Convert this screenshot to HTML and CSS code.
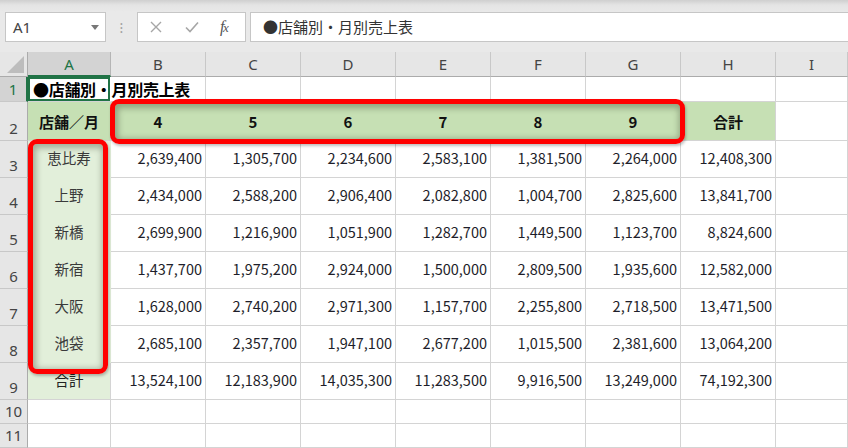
FILE: index.html
```html
<!DOCTYPE html>
<html lang="ja">
<head>
<meta charset="utf-8">
<title>店舗別・月別売上表</title>
<link rel="stylesheet" href="styles.css">
</head>
<body>
<div class="fbar">
  <div class="namebox"><span class="ref">A1</span><span class="drop"></span></div>
  <div class="grip">⁝</div>
  <div class="btns">
    <svg class="ic" width="14" height="14" viewBox="0 0 14 14"><path d="M2 2L12 12M12 2L2 12" stroke="#a6a6a6" stroke-width="1.4" fill="none"/></svg>
    <svg class="ic" width="16" height="14" viewBox="0 0 16 14"><path d="M2 7.5L6 11.5L14 2.5" stroke="#a6a6a6" stroke-width="1.6" fill="none"/></svg>
    <span class="fx"><i>f</i><i class="x">x</i></span>
  </div>
  <div class="finput">●店舗別・月別売上表</div>
</div>
<div class="sheet">
  <div class="corner"><span class="tri"></span></div>
  <div class="ch sel">A</div><div class="ch">B</div><div class="ch">C</div><div class="ch">D</div><div class="ch">E</div><div class="ch">F</div><div class="ch">G</div><div class="ch">H</div><div class="ch">I</div>

  <div class="rh sel">1</div>
  <div class="c a1"><span class="title">●店舗別・月別売上表</span></div><div class="c"></div><div class="c"></div><div class="c"></div><div class="c"></div><div class="c"></div><div class="c"></div><div class="c"></div><div class="c"></div>

  <div class="rh">2</div>
  <div class="c hd g1">店舗／月</div><div class="c hd g1 in">4</div><div class="c hd g1 in">5</div><div class="c hd g1 in">6</div><div class="c hd g1 in">7</div><div class="c hd g1 in">8</div><div class="c hd g1 in">9</div><div class="c hd g1">合計</div><div class="c"></div>

  <div class="rh">3</div>
  <div class="c st g2 in">恵比寿</div><div class="c n">2,639,400</div><div class="c n">1,305,700</div><div class="c n">2,234,600</div><div class="c n">2,583,100</div><div class="c n">1,381,500</div><div class="c n">2,264,000</div><div class="c n">12,408,300</div><div class="c"></div>

  <div class="rh">4</div>
  <div class="c st g2 in">上野</div><div class="c n">2,434,000</div><div class="c n">2,588,200</div><div class="c n">2,906,400</div><div class="c n">2,082,800</div><div class="c n">1,004,700</div><div class="c n">2,825,600</div><div class="c n">13,841,700</div><div class="c"></div>

  <div class="rh">5</div>
  <div class="c st g2 in">新橋</div><div class="c n">2,699,900</div><div class="c n">1,216,900</div><div class="c n">1,051,900</div><div class="c n">1,282,700</div><div class="c n">1,449,500</div><div class="c n">1,123,700</div><div class="c n">8,824,600</div><div class="c"></div>

  <div class="rh">6</div>
  <div class="c st g2 in">新宿</div><div class="c n">1,437,700</div><div class="c n">1,975,200</div><div class="c n">2,924,000</div><div class="c n">1,500,000</div><div class="c n">2,809,500</div><div class="c n">1,935,600</div><div class="c n">12,582,000</div><div class="c"></div>

  <div class="rh">7</div>
  <div class="c st g2 in">大阪</div><div class="c n">1,628,000</div><div class="c n">2,740,200</div><div class="c n">2,971,300</div><div class="c n">1,157,700</div><div class="c n">2,255,800</div><div class="c n">2,718,500</div><div class="c n">13,471,500</div><div class="c"></div>

  <div class="rh">8</div>
  <div class="c st g2 in">池袋</div><div class="c n">2,685,100</div><div class="c n">2,357,700</div><div class="c n">1,947,100</div><div class="c n">2,677,200</div><div class="c n">1,015,500</div><div class="c n">2,381,600</div><div class="c n">13,064,200</div><div class="c"></div>

  <div class="rh">9</div>
  <div class="c st g2 tot">合計</div><div class="c n">13,524,100</div><div class="c n">12,183,900</div><div class="c n">14,035,300</div><div class="c n">11,283,500</div><div class="c n">9,916,500</div><div class="c n">13,249,000</div><div class="c n">74,192,300</div><div class="c"></div>

  <div class="rh">10</div>
  <div class="c"></div><div class="c"></div><div class="c"></div><div class="c"></div><div class="c"></div><div class="c"></div><div class="c"></div><div class="c"></div><div class="c"></div>

  <div class="rh">11</div>
  <div class="c"></div><div class="c"></div><div class="c"></div><div class="c"></div><div class="c"></div><div class="c"></div><div class="c"></div><div class="c"></div><div class="c"></div>

  <div class="mark mark-months"></div>
  <div class="mark mark-stores"></div>
</div>
</body>
</html>
```
FILE: styles.css
```css
* { box-sizing: border-box; }
html, body { margin: 0; padding: 0; }
body {
  width: 848px;
  height: 448px;
  overflow: hidden;
  background: #ffffff;
  font-family: "Noto Sans CJK JP", "Noto Sans", sans-serif;
  color: #222;
}

/* formula bar */
.fbar {
  height: 52px;
  display: flex;
  align-items: flex-start;
  padding: 12px 0 0 5px;
  background: linear-gradient(#cfcfcf 0px, #e4e4e4 5px, #e9e9e9 12px);
}
.namebox {
  width: 101px;
  height: 30px;
  background: #fff;
  border: 1px solid #c6c6c6;
  display: flex;
  align-items: center;
  justify-content: space-between;
  padding: 0 6px 0 7px;
}
.ref { font-size: 15px; color: #444; font-family: "Noto Sans", sans-serif; }
.drop {
  width: 0; height: 0;
  border-left: 4px solid transparent;
  border-right: 4px solid transparent;
  border-top: 5px solid #777;
}
.grip {
  width: 31px;
  height: 30px;
  line-height: 30px;
  text-align: center;
  color: #a0a0a0;
  font-size: 14px;
}
.btns {
  width: 109px;
  height: 30px;
  background: #fff;
  border: 1px solid #c6c6c6;
  display: flex;
  align-items: center;
  padding: 0 0 0 11px;
}
.btns .ic:first-child { margin-right: 21px; }
.btns .ic:nth-child(2) { margin-right: 20px; }
.fx {
  font-family: "Liberation Serif", "DejaVu Serif", serif;
  font-size: 16px;
  color: #555;
  letter-spacing: -1.5px;
}
.fx .x { font-size: 13px; }
.finput {
  margin-left: 4px;
  flex: 1;
  height: 30px;
  background: #fff;
  border: 1px solid #c6c6c6;
  border-right: none;
  padding-left: 12px;
  font-size: 15px;
  line-height: 28px;
  color: #333;
}

/* sheet grid */
.sheet {
  position: relative;
  display: grid;
  grid-template-columns: 28px 83px repeat(7, 95px) 72px;
  grid-template-rows: 25px 25px 39px repeat(7, 37px) 24px 24px;
  background: #fff;
}
.corner {
  background: #e6e6e6;
  border-right: 1px solid #ababab;
  border-bottom: 1px solid #ababab;
  position: relative;
}
.tri {
  position: absolute;
  right: 3px;
  bottom: 3px;
  width: 0; height: 0;
  border-left: 17px solid transparent;
  border-bottom: 17px solid #bdbdbd;
}
.ch {
  background: #e6e6e6;
  border-right: 1px solid #c8c8c8;
  border-bottom: 1px solid #ababab;
  text-align: center;
  font-size: 15px;
  line-height: 24px;
  color: #444;
  font-family: "Noto Sans", sans-serif;
}
.ch.sel {
  background: #d3d3d3;
  color: #217346;
  border-bottom: 2px solid #217346;
  border-right-color: #b5b5b5;
}
.rh {
  background: #e6e6e6;
  border-right: 1px solid #ababab;
  border-bottom: 1px solid #c8c8c8;
  text-align: center;
  font-size: 15px;
  color: #444;
  font-family: "Noto Sans", sans-serif;
  display: flex;
  align-items: flex-end;
  justify-content: center;
  padding-bottom: 2px;
}
.rh.sel {
  background: #d3d3d3;
  color: #217346;
  border-right: 2px solid #217346;
  align-items: center;
  padding-bottom: 0;
}
.c {
  border-right: 1px solid #d4d4d4;
  border-bottom: 1px solid #d4d4d4;
  font-size: 14.5px;
  white-space: nowrap;
  display: flex;
  align-items: center;
  color: #1e1e2a;
}
.a1 {
  box-shadow: inset 0 0 0 2px #217346;
  border-right-color: transparent;
  overflow: visible;
  padding-left: 5px;
  position: relative;
  z-index: 1;
}
.title {
  font-size: 16px;
  font-weight: 700;
  color: #000;
  letter-spacing: -0.3px;
}
.g1 { background: #c6e0b4; }
.g2 { background: #e2efda; }
.in { border-right-color: transparent; }
.g1.in { border-right-color: #c6e0b4; }
.st.in { border-bottom-color: #e2efda; }
.hd {
  justify-content: center;
  font-weight: 700;
  font-size: 15px;
  color: #111;
}
.st {
  justify-content: center;
  color: #3a3a3a;
  padding-bottom: 4px;
}
.st.tot { color: #222; }
.n {
  justify-content: flex-end;
  padding-right: 3px;
  padding-bottom: 4px;
}

/* red highlight shapes */
.mark {
  position: absolute;
  border: 5px solid #ff0000;
  border-radius: 9px;
  box-shadow: inset 1px 2px 6px 2px rgba(40, 50, 30, 0.35), 1px 2px 3px rgba(0, 0, 0, 0.25);
  z-index: 2;
  pointer-events: none;
}
.mark-months { left: 110px; top: 47px; width: 575px; height: 45px; }
.mark-stores { left: 28px; top: 87px; width: 80px; height: 235px; }
```
